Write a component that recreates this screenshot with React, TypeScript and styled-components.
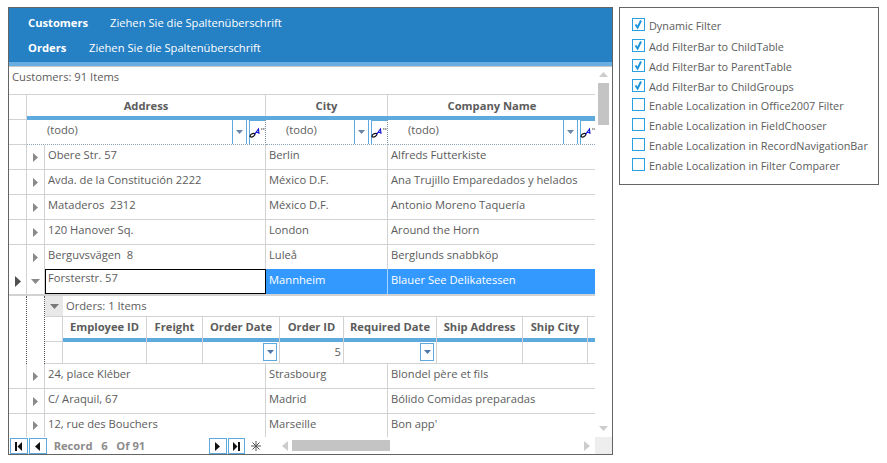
import * as React from 'react';
import styled, { createGlobalStyle } from 'styled-components';

const LINE = '#d2d2d2';
const BLUE = '#5eaade';
const TEXT = '#5c5c5c';

const GlobalStyle = createGlobalStyle`
    html, body {
        margin: 0;
        padding: 0;
        background: #fff;
    }
    * {
        box-sizing: border-box;
    }
    body {
        font-family: "Open Sans", "Liberation Sans", sans-serif;
        font-size: 11.2px;
        color: ${TEXT};
    }
`;

const Page = styled.div`
    display: flex;
    align-items: flex-start;
    gap: 6px;
    padding: 7px 0 0 8px;
`;

const GridFrame = styled.div`
    width: 605px;
    height: 448px;
    border: 1px solid #646464;
    display: flex;
    flex-direction: column;
`;

const GroupBand = styled.div`
    height: 59px;
    background: #2580c4;
    border-bottom: 1px solid #c8c8c8;
    box-shadow: inset 0 -4px 0 #68aee0;
    padding: 2px 0 0 19px;
    flex-shrink: 0;
`;

const GroupLine = styled.div`
    height: 25px;
    display: flex;
    align-items: center;
    color: #fff;
`;

const GroupName = styled.span<{ $width: number }>`
    font-weight: 700;
    width: ${({ $width }) => $width}px;
`;

const GridBody = styled.div`
    display: flex;
    flex: 1;
    min-height: 0;
`;

const Content = styled.div`
    width: 586px;
    overflow: hidden;
`;

const Caption = styled.div`
    height: 28px;
    padding: 2px 0 0 3px;
    line-height: 16px;
    border-bottom: 1px solid ${LINE};
`;

const HeaderRow = styled.div`
    display: flex;
    height: 25px;
`;

const Corner = styled.div`
    width: 18px;
    height: 100%;
    flex-shrink: 0;
    border-right: 1px solid ${LINE};
    border-bottom: 1px solid ${LINE};
`;

const HeaderMain = styled.div`
    display: flex;
    flex-direction: column;
`;

const HeaderCells = styled.div`
    display: flex;
    height: 21px;
`;

const HeaderBar = styled.div`
    height: 4px;
    background: ${BLUE};
`;

const HeaderCell = styled.div<{ $width: number }>`
    width: ${({ $width }) => $width}px;
    flex-shrink: 0;
    border-right: 1px solid ${LINE};
    font-weight: 700;
    text-align: center;
    line-height: 21px;
`;

const FilterRow = styled.div`
    display: flex;
    height: 25px;
`;

const FilterIndicator = styled.div`
    width: 18px;
    flex-shrink: 0;
    border-right: 1px solid ${LINE};
    border-bottom: 1px solid ${LINE};
`;

const FilterCell = styled.div<{ $width: number }>`
    width: ${({ $width }) => $width}px;
    flex-shrink: 0;
    display: flex;
    padding-left: 20px;
    border-right: 1px dotted #7f8fa6;
    border-bottom: 1px dotted #8fa3b8;
`;

const FilterText = styled.span`
    flex: 1;
    line-height: 19px;
`;

const DropButton = styled.div`
    width: 15px;
    border-left: 1px solid ${BLUE};
    border-right: 1px solid ${BLUE};
    display: flex;
    align-items: center;
    justify-content: center;
`;

const FunnelButton = styled.div`
    width: 16px;
    margin-left: 2px;
    border-left: 1px solid ${BLUE};
    border-top: 1px solid ${BLUE};
    padding-top: 6px;
`;

const Row = styled.div<{ $last?: boolean; $flat?: boolean; $selected?: boolean }>`
    display: flex;
    height: ${({ $last, $flat, $selected }) => ($selected ? 27 : $last ? 23 : $flat ? 24 : 25)}px;
    border-bottom: ${({ $last, $flat, $selected }) => ($selected ? `2px solid ${LINE}` : $last || $flat ? 'none' : `1px solid ${LINE}`)};
`;

const Gutter = styled.div`
    width: 18px;
    flex-shrink: 0;
    border-right: 1px solid ${LINE};
    display: flex;
    align-items: center;
    justify-content: center;
`;

const Cell = styled.div<{ $width: number; $selected?: boolean }>`
    width: ${({ $width }) => $width}px;
    flex-shrink: 0;
    padding: ${({ $selected }) => ($selected ? 2 : 1)}px 0 0 3px;
    line-height: 17px;
    white-space: pre;
    border-right: 1px solid ${({ $selected }) => ($selected ? '#a8d2fb' : LINE)};
    background: ${({ $selected }) => ($selected ? '#3399ff' : 'transparent')};
    color: ${({ $selected }) => ($selected ? '#fff' : TEXT)};
`;

const CurrentCell = styled.div`
    width: 221px;
    flex-shrink: 0;
    border: 1px solid #000;
    padding: 0 0 0 2px;
    line-height: 15px;
`;

const DetailRow = styled.div`
    display: flex;
    height: 68px;
`;

const DottedGutter = styled.div`
    width: 18px;
    flex-shrink: 0;
    border-right: 1px dotted #555;
`;

const DetailPanel = styled.div`
    display: flex;
    flex-direction: column;
    flex: 1;
    min-width: 0;
    border-bottom: 1px solid ${LINE};
`;

const DetailCaption = styled.div`
    display: flex;
    height: 21px;
    border-bottom: 1px solid ${LINE};
    line-height: 20px;
    gap: 3px;
`;

const CollapseBox = styled.div`
    width: 18px;
    background: #e8e8e8;
    display: flex;
    align-items: center;
    justify-content: center;
`;

const DetailHeader = styled.div`
    display: flex;
    height: 25px;
`;

const DetailCorner = styled.div`
    width: 18px;
    flex-shrink: 0;
    border-right: 1px solid ${LINE};
    border-bottom: 1px solid ${LINE};
`;

const DetailHeaderCell = styled.div<{ $width: number }>`
    width: ${({ $width }) => $width}px;
    flex-shrink: 0;
    border-right: 1px solid ${LINE};
    box-shadow: inset 0 -4px 0 ${BLUE};
    font-weight: 700;
    text-align: center;
    line-height: 19px;
`;

const DetailFilter = styled.div`
    display: flex;
    flex: 1;
`;

const DetailFilterCorner = styled.div`
    width: 18px;
    flex-shrink: 0;
    border-right: 1px solid ${LINE};
`;

const DetailFilterCell = styled.div<{ $width: number }>`
    width: ${({ $width }) => $width}px;
    flex-shrink: 0;
    border-right: 1px solid ${LINE};
    display: flex;
    justify-content: flex-end;
    align-items: flex-start;
    padding: 1px 2px 0 0;
`;

const BoxDrop = styled.div`
    width: 14px;
    height: 18px;
    border: 1px solid ${BLUE};
    display: flex;
    align-items: center;
    justify-content: center;
`;

const FilterValue = styled.span`
    color: ${TEXT};
    line-height: 18px;
`;

const VScroll = styled.div`
    width: 17px;
    display: flex;
    flex-direction: column;
    align-items: center;
    padding: 5px 0 6px;
`;

const Thumb = styled.div`
    width: 11px;
    height: 42px;
    margin-top: 6px;
    background: #c4c4c4;
`;

const ScrollEnd = styled.div`
    margin-top: auto;
    line-height: 0;
`;

const NavBar = styled.div`
    display: flex;
    height: 17px;
    flex-shrink: 0;
    align-items: flex-start;
    padding-left: 1px;
`;

const NavButton = styled.div`
    width: 18px;
    height: 16px;
    margin: 1px 1px 0 0;
    border: 1px solid ${BLUE};
    display: flex;
    align-items: center;
    justify-content: center;
`;

const RecordLabel = styled.div`
    width: 163px;
    padding-left: 6px;
    font-weight: 700;
    color: #8c8c8c;
    line-height: 17px;
    white-space: pre;
`;

const StarBox = styled.div`
    width: 19px;
    height: 17px;
    display: flex;
    align-items: center;
    justify-content: center;
`;

const HScroll = styled.div`
    width: 317px;
    margin-left: 17px;
    height: 17px;
    display: flex;
    align-items: center;
`;

const HThumb = styled.div`
    width: 98px;
    height: 11px;
    margin-left: 4px;
    background: #c4c4c4;
`;

const HEnd = styled.div`
    margin-left: auto;
    margin-right: 5px;
    line-height: 0;
`;

const ScrollCorner = styled.div`
    width: 17px;
    height: 100%;
    background: #eeeeee;
`;

const OptionsPanel = styled.div`
    width: 260px;
    height: 178px;
    border: 1px solid #646464;
    padding: 10px 0 0 12px;
    display: flex;
    flex-direction: column;
    font-size: 10.85px;
`;

const Option = styled.label<{ $gap: number }>`
    display: flex;
    align-items: center;
    gap: 4px;
    height: 13px;
    margin-top: ${({ $gap }) => $gap}px;
    white-space: pre;
`;

const OptionText = styled.span`
    padding-top: 2px;
`;

const CheckBox = styled.span`
    width: 13px;
    height: 13px;
    flex-shrink: 0;
    border: 1px solid #2ba0e0;
    display: flex;
    align-items: center;
    justify-content: center;
`;

const ArrowRight = ({ color = '#8a8a8a', w = 5, h = 9 }: { color?: string; w?: number; h?: number }) => (
    <svg width={w} height={h} viewBox={`0 0 ${w} ${h}`}>
        <polygon points={`0,0 ${w},${h / 2} 0,${h}`} fill={color} />
    </svg>
);

const ArrowDown = ({ color = '#8a8a8a', w = 9, h = 5 }: { color?: string; w?: number; h?: number }) => (
    <svg width={w} height={h} viewBox={`0 0 ${w} ${h}`}>
        <polygon points={`0,0 ${w},0 ${w / 2},${h}`} fill={color} />
    </svg>
);

const ArrowUp = ({ color = '#cccccc', w = 9, h = 5 }: { color?: string; w?: number; h?: number }) => (
    <svg width={w} height={h} viewBox={`0 0 ${w} ${h}`} style={{ display: 'block' }}>
        <polygon points={`0,${h} ${w},${h} ${w / 2},0`} fill={color} />
    </svg>
);

const FunnelIcon = () => (
    <svg width="15" height="12" viewBox="0 0 15 12" style={{ display: 'block', overflow: 'visible' }}>
        <path d="M0 9.5 C0 7.5 2.5 6 5 6.5 C5 9 2 11 0 9.5 Z" fill="none" stroke="#111" strokeWidth="1.2" />
        <path d="M4.5 7.5 L8.5 2 L9 7 M6 5.5 H9" fill="none" stroke="#1010d8" strokeWidth="1.1" />
        <path d="M11 2 H12.5 M13 2 H14.5" stroke="#444" strokeWidth="1" />
    </svg>
);

const CheckMark = () => (
    <svg width="11" height="11" viewBox="0 0 11 11">
        <path d="M2.5 5.5 L4.6 8.6 L8 1.5" fill="none" stroke="#1c95dc" strokeWidth="2" />
    </svg>
);

const NavFirst = () => (
    <svg width="8" height="9" viewBox="0 0 8 9">
        <rect x="0" y="0" width="2" height="9" fill="#111" />
        <polygon points="7,0 2.5,4.5 7,9" fill="#111" />
    </svg>
);

const NavLast = () => (
    <svg width="8" height="9" viewBox="0 0 8 9">
        <polygon points="1,0 5.5,4.5 1,9" fill="#111" />
        <rect x="6" y="0" width="2" height="9" fill="#111" />
    </svg>
);

const NavPrev = () => (
    <svg width="5" height="9" viewBox="0 0 5 9">
        <polygon points="5,0 0,4.5 5,9" fill="#111" />
    </svg>
);

const StarIcon = () => (
    <svg width="10" height="10" viewBox="0 0 10 10">
        <path d="M5 0 V10 M0 5 H10 M1.5 1.5 L8.5 8.5 M8.5 1.5 L1.5 8.5" stroke="#555" strokeWidth="1" />
    </svg>
);

const CUSTOMERS_TOP = [
    ['Obere Str. 57', 'Berlin', 'Alfreds Futterkiste'],
    ['Avda. de la Constitución 2222', 'México D.F.', 'Ana Trujillo Emparedados y helados'],
    ['Mataderos  2312', 'México D.F.', 'Antonio Moreno Taquería'],
    ['120 Hanover Sq.', 'London', 'Around the Horn'],
    ['Berguvsvägen  8', 'Luleå', 'Berglunds snabbköp'],
];

const CUSTOMERS_BOTTOM = [
    ['24, place Kléber', 'Strasbourg', 'Blondel père et fils'],
    ['C/ Araquil, 67', 'Madrid', 'Bólido Comidas preparadas'],
    ['12, rue des Bouchers', 'Marseille', "Bon app'"],
];

const COLUMNS = [
    { title: 'Address', width: 239 },
    { title: 'City', width: 122 },
    { title: 'Company Name', width: 209 },
];

const ORDER_COLUMNS = [
    { title: 'Employee ID', width: 84 },
    { title: 'Freight', width: 56 },
    { title: 'Order Date', width: 77, drop: true },
    { title: 'Order ID', width: 64, value: '5' },
    { title: 'Required Date', width: 93, drop: true },
    { title: 'Ship Address', width: 86 },
    { title: 'Ship City', width: 65 },
    { title: '', width: 20 },
];

const OPTIONS = [
    { label: 'Dynamic Filter', checked: true, gap: 0 },
    { label: 'Add FilterBar to ChildTable', checked: true, gap: 8 },
    { label: 'Add FilterBar to ParentTable', checked: true, gap: 7 },
    { label: 'Add FilterBar to ChildGroups', checked: true, gap: 7 },
    { label: 'Enable Localization in Office2007 Filter', checked: false, gap: 6 },
    { label: 'Enable Localization in FieldChooser', checked: false, gap: 7 },
    { label: 'Enable Localization in RecordNavigationBar', checked: false, gap: 7 },
    { label: 'Enable Localization in Filter Comparer', checked: false, gap: 7 },
];

const DataRow = ({ cells, last, flat }: { cells: string[]; last?: boolean; flat?: boolean }) => (
    <Row $last={last} $flat={flat}>
        <Gutter />
        <Gutter>
            <ArrowRight />
        </Gutter>
        <Cell $width={221}>{cells[0]}</Cell>
        <Cell $width={122}>{cells[1]}</Cell>
        <Cell $width={209}>{cells[2]}</Cell>
    </Row>
);

const App = () => (
    <Page>
        <GlobalStyle />
        <GridFrame>
            <GroupBand>
                <GroupLine>
                    <GroupName $width={82}>Customers</GroupName>
                    <span>Ziehen Sie die Spaltenüberschrift</span>
                </GroupLine>
                <GroupLine>
                    <GroupName $width={61}>Orders</GroupName>
                    <span>Ziehen Sie die Spaltenüberschrift</span>
                </GroupLine>
            </GroupBand>
            <GridBody>
                <Content>
                    <Caption>Customers: 91 Items</Caption>
                    <HeaderRow>
                        <Corner />
                        <HeaderMain>
                            <HeaderCells>
                                {COLUMNS.map((col) => (
                                    <HeaderCell key={col.title} $width={col.width}>
                                        {col.title}
                                    </HeaderCell>
                                ))}
                            </HeaderCells>
                            <HeaderBar />
                        </HeaderMain>
                    </HeaderRow>
                    <FilterRow>
                        <FilterIndicator />
                        {COLUMNS.map((col) => (
                            <FilterCell key={col.title} $width={col.width}>
                                <FilterText>(todo)</FilterText>
                                <DropButton>
                                    <ArrowDown color="#6b87a8" w={7} h={4} />
                                </DropButton>
                                <FunnelButton>
                                    <FunnelIcon />
                                </FunnelButton>
                            </FilterCell>
                        ))}
                    </FilterRow>
                    {CUSTOMERS_TOP.map((cells, i) => (
                        <DataRow key={cells[0]} cells={cells} flat={i === CUSTOMERS_TOP.length - 1} />
                    ))}
                    <Row $selected>
                        <Gutter>
                            <ArrowRight color="#505050" w={6} h={11} />
                        </Gutter>
                        <Gutter>
                            <ArrowDown />
                        </Gutter>
                        <CurrentCell>Forsterstr. 57</CurrentCell>
                        <Cell $width={122} $selected>
                            Mannheim
                        </Cell>
                        <Cell $width={209} $selected>
                            Blauer See Delikatessen
                        </Cell>
                    </Row>
                    <DetailRow>
                        <DottedGutter />
                        <DottedGutter />
                        <DetailPanel>
                            <DetailCaption>
                                <CollapseBox>
                                    <ArrowDown color="#777" />
                                </CollapseBox>
                                <span>Orders: 1 Items</span>
                            </DetailCaption>
                            <DetailHeader>
                                <DetailCorner />
                                {ORDER_COLUMNS.map((col) => (
                                    <DetailHeaderCell key={col.title} $width={col.width}>
                                        {col.title}
                                    </DetailHeaderCell>
                                ))}
                            </DetailHeader>
                            <DetailFilter>
                                <DetailFilterCorner />
                                {ORDER_COLUMNS.map((col) => (
                                    <DetailFilterCell key={col.title} $width={col.width}>
                                        {col.drop && (
                                            <BoxDrop>
                                                <ArrowDown color="#4f78a8" w={7} h={4} />
                                            </BoxDrop>
                                        )}
                                        {col.value && <FilterValue>{col.value}</FilterValue>}
                                    </DetailFilterCell>
                                ))}
                            </DetailFilter>
                        </DetailPanel>
                    </DetailRow>
                    {CUSTOMERS_BOTTOM.map((cells, i) => (
                        <DataRow key={cells[0]} cells={cells} last={i === CUSTOMERS_BOTTOM.length - 1} />
                    ))}
                </Content>
                <VScroll>
                    <ArrowUp />
                    <Thumb />
                    <ScrollEnd>
                        <ArrowDown color="#cccccc" />
                    </ScrollEnd>
                </VScroll>
            </GridBody>
            <NavBar>
                <NavButton>
                    <NavFirst />
                </NavButton>
                <NavButton>
                    <NavPrev />
                </NavButton>
                <RecordLabel>Record   6   Of 91</RecordLabel>
                <NavButton>
                    <ArrowRight color="#111" />
                </NavButton>
                <NavButton>
                    <NavLast />
                </NavButton>
                <StarBox>
                    <StarIcon />
                </StarBox>
                <HScroll>
                    <svg width="6" height="10" viewBox="0 0 6 10">
                        <polygon points="6,0 0,5 6,10" fill="#cccccc" />
                    </svg>
                    <HThumb />
                    <HEnd>
                        <ArrowRight color="#cccccc" w={6} h={10} />
                    </HEnd>
                </HScroll>
                <ScrollCorner />
            </NavBar>
        </GridFrame>
        <OptionsPanel>
            {OPTIONS.map((opt) => (
                <Option key={opt.label} $gap={opt.gap}>
                    <CheckBox>{opt.checked && <CheckMark />}</CheckBox>
                    <OptionText>{opt.label}</OptionText>
                </Option>
            ))}
        </OptionsPanel>
    </Page>
);

export default App;
